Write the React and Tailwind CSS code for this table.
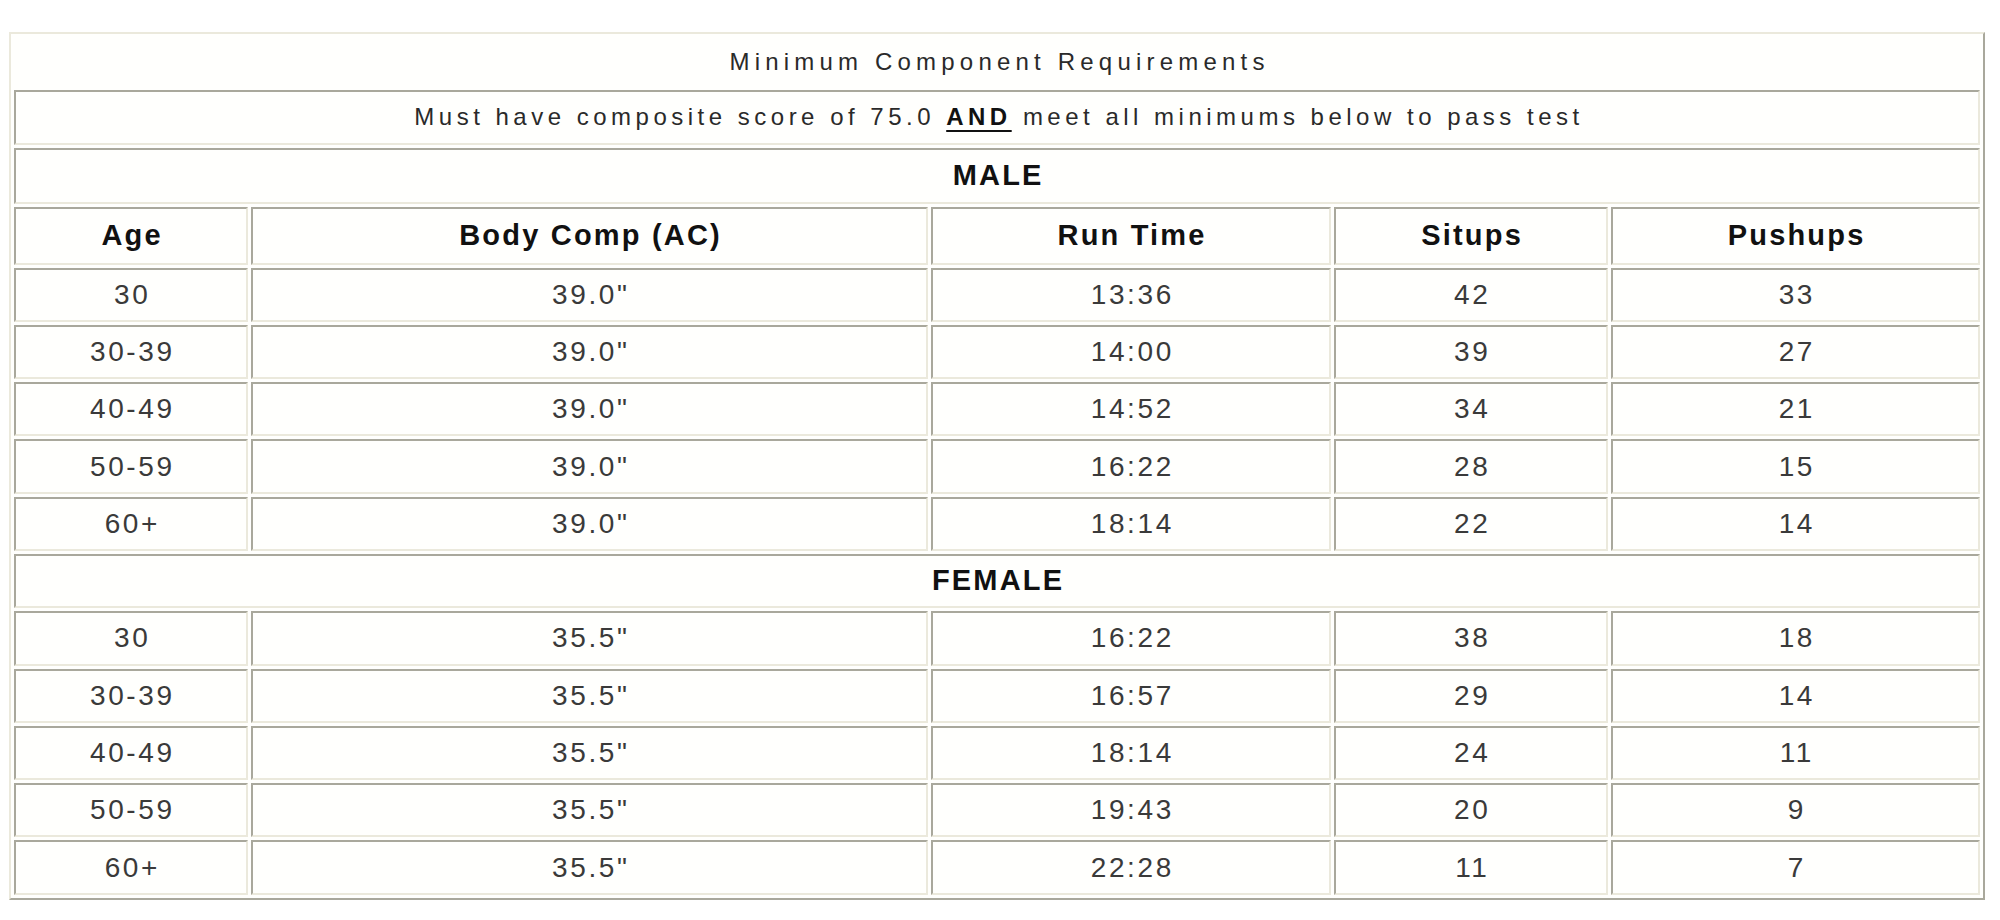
import React from 'react';

const male = [
  ['30', '39.0"', '13:36', '42', '33'],
  ['30-39', '39.0"', '14:00', '39', '27'],
  ['40-49', '39.0"', '14:52', '34', '21'],
  ['50-59', '39.0"', '16:22', '28', '15'],
  ['60+', '39.0"', '18:14', '22', '14'],
];

const female = [
  ['30', '35.5"', '16:22', '38', '18'],
  ['30-39', '35.5"', '16:57', '29', '14'],
  ['40-49', '35.5"', '18:14', '24', '11'],
  ['50-59', '35.5"', '19:43', '20', '9'],
  ['60+', '35.5"', '22:28', '11', '7'],
];

const cell =
  'p-0 text-center align-middle border-2 border-t-[#a9a89c] border-l-[#a9a89c] border-b-[#ebe9dc] border-r-[#ebe9dc]';

function DataRow({ row }) {
  return (
    <tr>
      {row.map((v, i) => (
        <td key={i} className={`${cell} h-[54.3px] text-[28px] tracking-[2.6px] pl-[2.6px] text-[#3a3a3a]`}>
          {v}
        </td>
      ))}
    </tr>
  );
}

function GroupRow({ label, tall }) {
  return (
    <tr>
      <td
        colSpan={5}
        className={`${cell} ${tall ? 'h-[56px]' : 'h-[54.3px]'} text-[29px] font-bold tracking-[2.2px] pl-[2.2px] text-[#111]`}
      >
        {label}
      </td>
    </tr>
  );
}

export default function App() {
  const headers = ['Age', 'Body Comp (AC)', 'Run Time', 'Situps', 'Pushups'];
  return (
    <div className="min-h-screen bg-white pt-[32px] pl-[9px] font-['Liberation_Sans',Arial,sans-serif]">
      <table className="w-[1976px] table-fixed border-separate border-spacing-[3px] border-2 border-t-[#ebe9dc] border-l-[#ebe9dc] border-r-[#a9a89c] border-b-[#a9a89c] bg-[#fffffd]">
        <colgroup>
          <col className="w-[234px]" />
          <col className="w-[677px]" />
          <col className="w-[400px]" />
          <col className="w-[274px]" />
          <col className="w-[369px]" />
        </colgroup>
        <tbody>
          <tr>
            <td colSpan={5} className="h-[50px] p-0 text-center align-middle text-[24px] tracking-[5.2px] pl-[5px] text-[#2a2a2a]">
              Minimum Component Requirements
            </td>
          </tr>
          <tr>
            <td colSpan={5} className={`${cell} h-[54.5px] text-[24px] tracking-[4.5px] pl-[4px] text-[#2a2a2a]`}>
              Must have composite score of 75.0{' '}
              <span className="font-bold underline decoration-2 underline-offset-[5px] text-[#111]">AND</span>{' '}
              meet all minimums below to pass test
            </td>
          </tr>
          <GroupRow label="MALE" tall />
          <tr>
            {headers.map((h) => (
              <th key={h} className={`${cell} h-[58px] text-[29px] font-bold tracking-[2.2px] pl-[2.2px] text-[#111]`}>
                {h}
              </th>
            ))}
          </tr>
          {male.map((r, i) => (
            <DataRow key={`m${i}`} row={r} />
          ))}
          <GroupRow label="FEMALE" />
          {female.map((r, i) => (
            <DataRow key={`f${i}`} row={r} />
          ))}
        </tbody>
      </table>
    </div>
  );
}
